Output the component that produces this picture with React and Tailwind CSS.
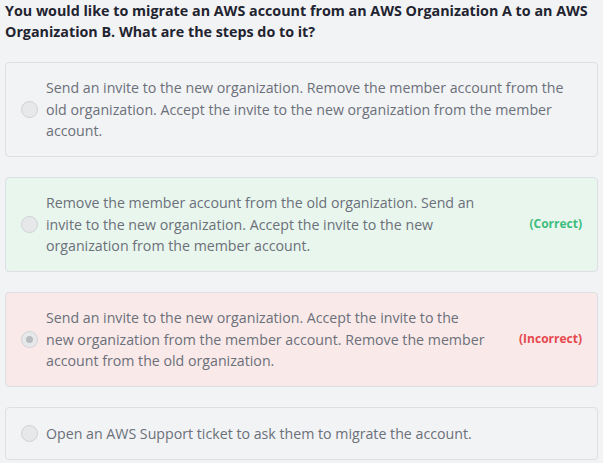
export default function App() {
  const options = [
    {
      text: 'Send an invite to the new organization. Remove the member account from the old organization. Accept the invite to the new organization from the member account.',
      state: null,
    },
    {
      text: 'Remove the member account from the old organization. Send an invite to the new organization. Accept the invite to the new organization from the member account.',
      state: 'correct',
    },
    {
      text: 'Send an invite to the new organization. Accept the invite to the new organization from the member account. Remove the member account from the old organization.',
      state: 'incorrect',
      checked: true,
    },
    {
      text: 'Open an AWS Support ticket to ask them to migrate the account.',
      state: null,
    },
  ];

  return (
    <div className="min-h-screen bg-[#f2f3f5] px-[5px] font-['Open_Sans',sans-serif]">
      <h1 className="text-[14.3px] font-bold leading-[21px] text-[#1f2430]">
        You would like to migrate an AWS account from an AWS Organization A to an AWS Organization B. What are the steps do to it?
      </h1>
      <div className="mt-[20px] flex flex-col gap-[20.5px]">
        {options.map((o, i) => (
          <div
            key={i}
            className={
              'flex min-h-[53px] items-center gap-[8px] rounded border border-[#dcdfe3] py-[14px] pl-[15px] pr-[15px] ' +
              (o.state === 'correct'
                ? 'bg-[#e8f6ee]'
                : o.state === 'incorrect'
                ? 'bg-[#f9e9e9]'
                : 'bg-[#f2f3f5]')
            }
          >
            <span className="flex h-[17px] w-[17px] shrink-0 items-center justify-center rounded-full border border-[#cfd2d6] bg-[#e7e8ea]">
              {o.checked && <span className="h-[7px] w-[7px] rounded-full bg-[#b8bbbf]" />}
            </span>
            <p className="flex-1 text-[14.2px] leading-[21.5px] text-[#6b7079]">{o.text}</p>
            {o.state === 'correct' && (
              <span className="w-[85px] shrink-0 pl-[7px] text-right text-[12px] font-bold text-[#3dbd7d]">(Correct)</span>
            )}
            {o.state === 'incorrect' && (
              <span className="w-[85px] shrink-0 pl-[7px] text-right text-[12px] font-bold text-[#e5484d]">(Incorrect)</span>
            )}
          </div>
        ))}
      </div>
    </div>
  );
}
